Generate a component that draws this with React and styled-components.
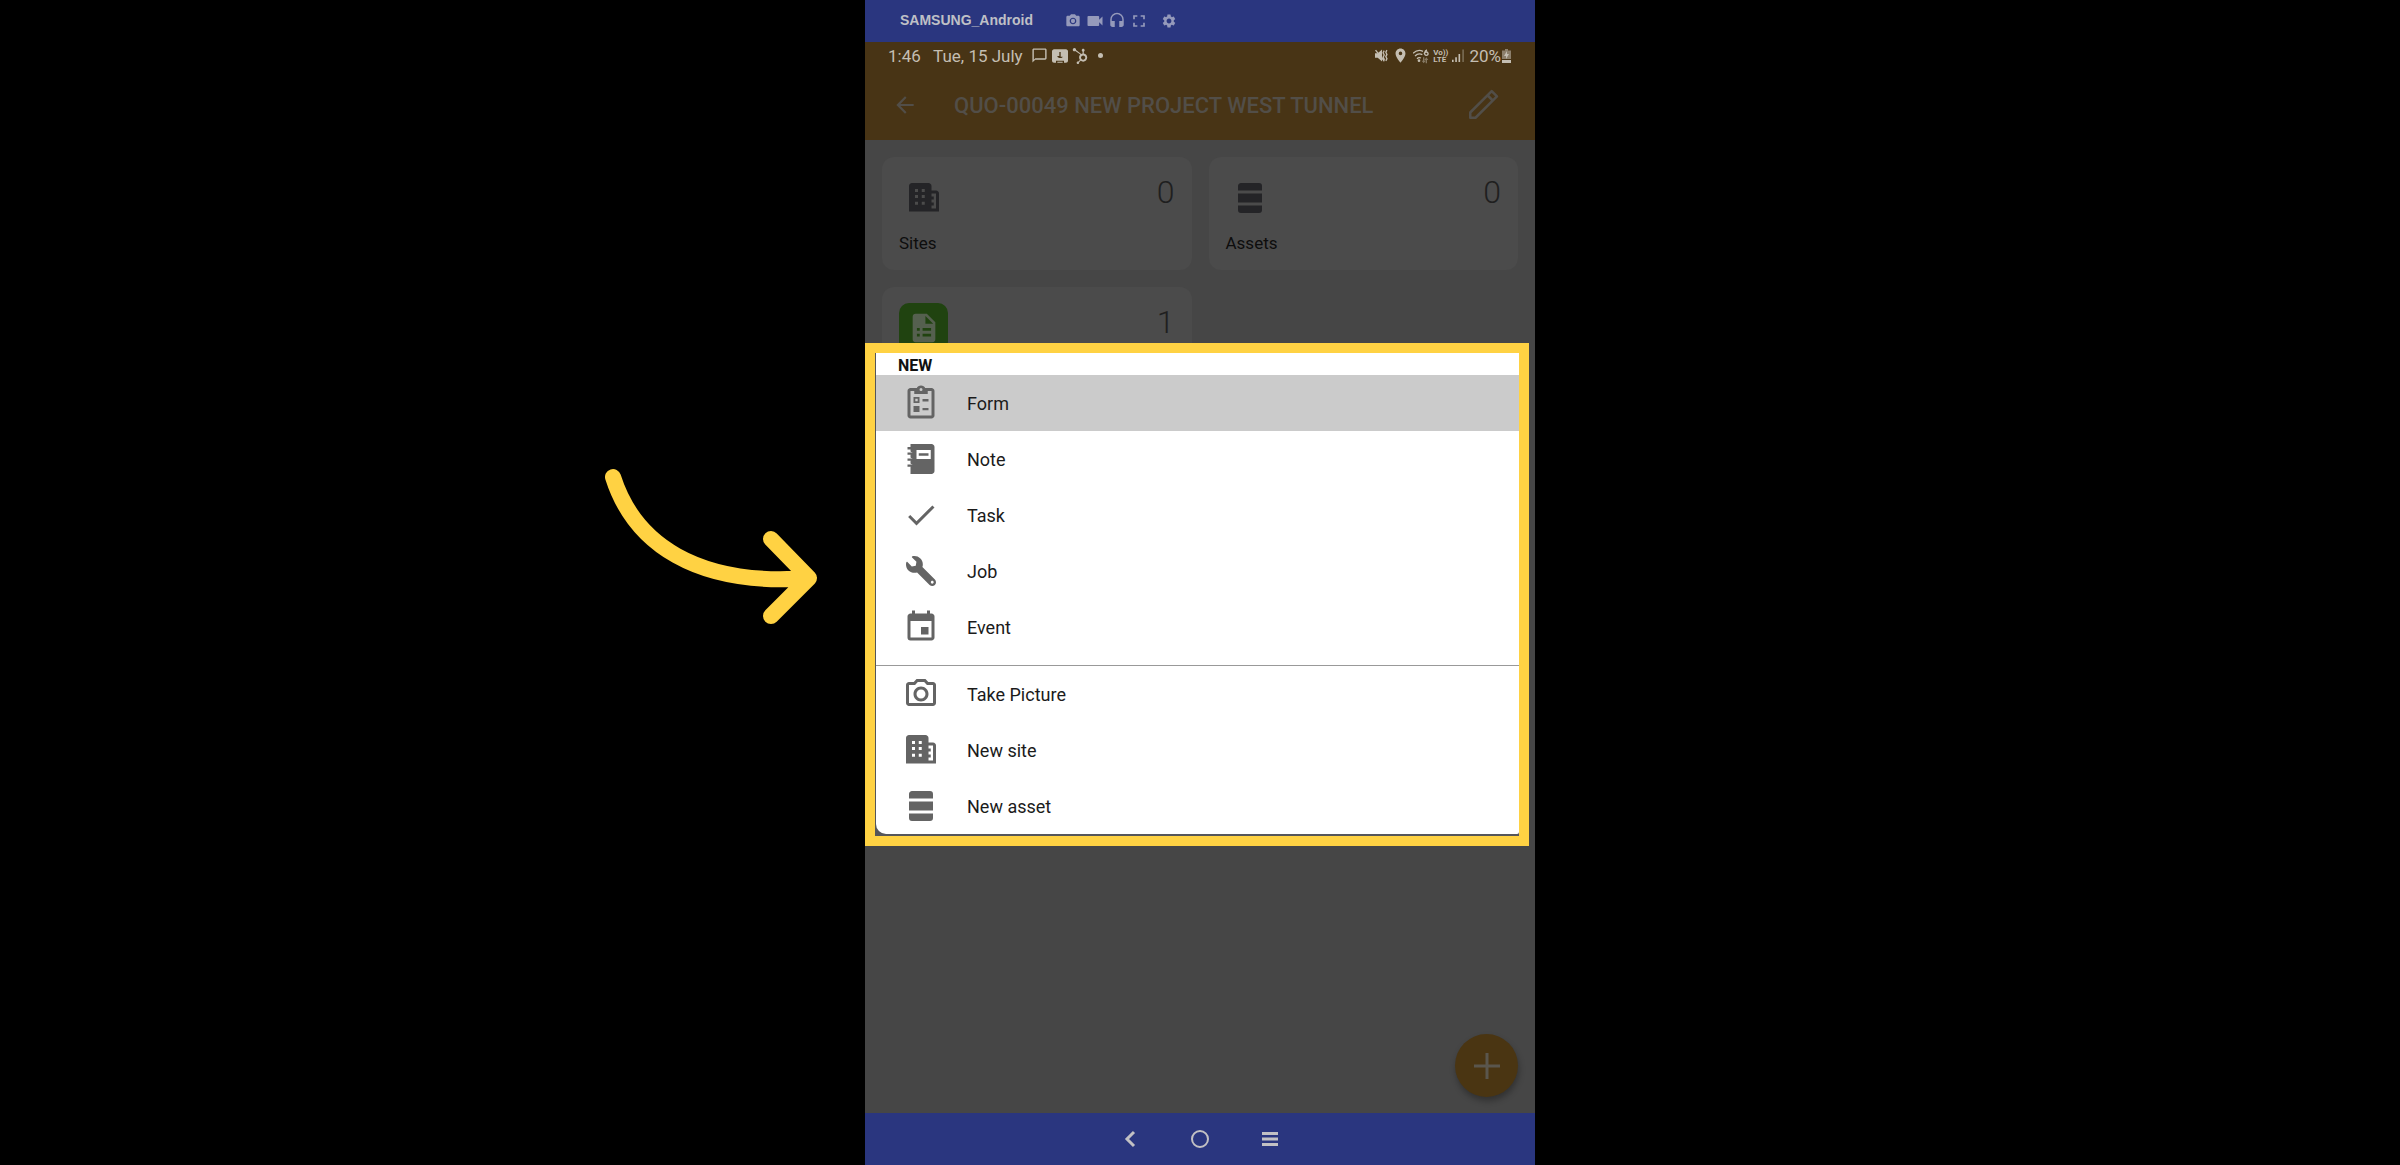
import React from 'react';
import styled, { createGlobalStyle } from 'styled-components';
import {
  MdPhotoCamera,
  MdVideocam,
  MdHeadset,
  MdFullscreen,
  MdSettings,
  MdArrowBack,
  MdCheck,
  MdEvent,
  MdOutlineCameraAlt,
  MdOutlineChatBubbleOutline,
  MdLocationOn,
} from 'react-icons/md';
import { FaHubspot, FaWrench } from 'react-icons/fa';

const GlobalStyle = createGlobalStyle`
  * {
    box-sizing: border-box;
  }

  body {
    margin: 0;
    background: #000;
    font-family: Roboto, "Liberation Sans", sans-serif;
  }

  button {
    padding: 0;
    border: 0;
    background: none;
    color: inherit;
    font: inherit;
    cursor: pointer;
  }

  svg {
    display: block;
    flex-shrink: 0;
  }
`;

const Page = styled.div`
  display: flex;
  justify-content: center;
  min-height: 100vh;
`;

const Phone = styled.main`
  position: relative;
  display: flex;
  flex-direction: column;
  width: 100%;
  max-width: 670px;
  background: #464646;
`;

const TitleBar = styled.div`
  display: flex;
  align-items: center;
  height: 42px;
  padding-left: 35px;
  padding-bottom: 2px;
  background: #2a367f;
  color: #bfc0c6;
  font: bold 14px "Liberation Sans", Arial, sans-serif;
`;

const Tools = styled.div`
  display: flex;
  align-items: center;
  margin-left: 29px;
  padding-top: 2px;
  color: #959abb;

  & button {
    display: flex;
    justify-content: center;
    width: 22px;
  }

  & button:last-child {
    margin-left: 8px;
  }
`;

const StatusBar = styled.div`
  display: flex;
  align-items: center;
  justify-content: space-between;
  height: 28px;
  padding: 0 24px 1px 23px;
  background: #483415;
  color: #c4beb2;
  font-size: 17px;
`;

const StatusGroup = styled.div`
  display: flex;
  align-items: center;
  gap: ${({ gap }) => gap}px;
`;

const Dot = styled.span`
  width: 5px;
  height: 5px;
  margin-left: 6px;
  border-radius: 50%;
  background: currentColor;
`;

const Volte = styled.span`
  font-size: 8px;
  font-weight: 700;
  line-height: 7px;
`;

const AppBar = styled.header`
  display: flex;
  align-items: center;
  height: 70px;
  padding: 0 34px 0 27px;
  background: #483415;
  color: #524e48;
`;

const Title = styled.h1`
  flex: 1;
  margin: 0 0 0 36px;
  font-size: 22px;
  font-weight: 500;
  white-space: nowrap;
`;

const Content = styled.section`
  position: relative;
  flex: 1;
  padding: 17px;
`;

const Cards = styled.div`
  display: grid;
  grid-template-columns: 1fr 1fr;
  gap: 17px;
`;

const Card = styled.article`
  display: flex;
  flex-direction: column;
  justify-content: space-between;
  height: 113px;
  padding: 16px 17px 17px;
  border-radius: 12px;
  background: #4b4b4b;
`;

const CardTop = styled.div`
  display: flex;
  align-items: flex-start;
  justify-content: space-between;
`;

const CardIcon = styled.span`
  display: flex;
  align-items: center;
  justify-content: center;
  width: 49px;
  height: 49px;
  border-radius: 10px;
  background: ${({ color }) => color || 'transparent'};
  color: ${({ color }) => (color ? '#55604f' : '#242427')};
`;

const Count = styled.span`
  color: #1f1f1f;
  font-size: 32px;
  font-weight: 300;
  line-height: 38px;
`;

const CardLabel = styled.span`
  color: #0d0d0d;
  font-size: 17px;
  line-height: 20px;
`;

const Menu = styled.div`
  position: absolute;
  top: 203px;
  left: 0;
  right: 6px;
  border: 10px solid #ffd243;
  background: #55565a;
`;

const Sheet = styled.div`
  margin: 0 0 2px 1px;
  border-radius: 0 0 2px 10px;
  background: #fff;
  overflow: hidden;
`;

const MenuTitle = styled.h2`
  margin: 0;
  padding: 4px 0 0 22px;
  color: #111;
  font-size: 16px;
  font-weight: 700;
  line-height: 18px;
`;

const MenuGroup = styled.div`
  padding-bottom: ${({ divided }) => (divided ? '10px' : '0')};
  border-bottom: ${({ divided }) => (divided ? '1px solid #999' : 'none')};
`;

const MenuItem = styled.button`
  display: flex;
  align-items: center;
  gap: 28px;
  width: 100%;
  height: 56px;
  padding-left: 27px;
  background: ${({ active }) => (active ? '#cbcbcb' : 'transparent')};
  text-align: left;

  & svg {
    color: #646464;
  }

  & span {
    color: #1b1b1b;
    font-size: 18px;
  }
`;

const WrenchIcon = styled(FaWrench)`
  width: 36px;
  height: 30px;
  transform: scaleX(-1);
`;

const AddButton = styled.button`
  position: absolute;
  right: 17px;
  bottom: 16px;
  display: flex;
  align-items: center;
  justify-content: center;
  width: 63px;
  height: 63px;
  border-radius: 50%;
  background: #4a3512;
  color: #5a564d;
  box-shadow: 1px 4px 6px rgba(0, 0, 0, 0.3);
`;

const NavBar = styled.nav`
  display: flex;
  align-items: center;
  justify-content: center;
  gap: 46px;
  height: 52px;
  background: #2a367f;
  color: #c2c1c4;

  & button {
    display: flex;
    justify-content: center;
    width: 24px;
  }
`;

const Pointer = styled.svg`
  position: absolute;
  top: 460px;
  right: 100%;
  margin-right: 44px;
`;

const Icon = ({ size = 36, children }) => (
  <svg width={size} height={size} viewBox="0 0 24 24" fill="currentColor" aria-hidden="true">
    {children}
  </svg>
);

const FormIcon = () => (
  <Icon>
    <path
      fillRule="evenodd"
      d="M19 2h-4.200C14.400 1 13.300.3 12 .3S9.600 1 9.200 2H5c-1.100 0-2 .9-2 2v16.300c0 1.100.9 2 2 2h14c1.100 0 2-.9 2-2V4c0-1.100-.9-2-2-2zM12 2a1 1 0 1 1 0 2 1 1 0 0 1 0-2zM5 4h2.500v2h9V4H19v16.300H5V4z"
    />
    <path fillRule="evenodd" d="M7 8h4v4H7V8zm1.200 1.200v1.600h1.600V9.200H8.200zM7 14h4v4H7v-4zM13 9.400h4V11h-4zM13 15.300h4v1.600h-4z" />
  </Icon>
);

const NoteIcon = () => (
  <Icon>
    <path
      fillRule="evenodd"
      d="M5 2h14c1.100 0 2 .9 2 2v16c0 1.100-.9 2-2 2H5v-5l1.500-1-1.500-1v-2l1.500-1L5 11V9l1.500-1L5 7V2zm4 4v6h9.500V6H9zm1.500 2.200H17v1.600h-6.500V8.200z"
    />
    <path d="M3 15.600h4v1.600H3zM3 11.600h4v1.600H3zM3 7.600h4v1.600H3zM3 4h4v1.600H3z" />
  </Icon>
);

const SiteIcon = () => (
  <Icon>
    <path
      fillRule="evenodd"
      d="M4 2h11c1.100 0 2 .9 2 2v3h3c1.100 0 2 .9 2 2v12H2V4c0-1.100.9-2 2-2zm2 4v2h2V6H6zm4.500 0v2h2V6h-2zM6 10v2h2v-2H6zm4.500 0v2h2v-2h-2zM6 14.500v2h2v-2H6zm4.500 0v2h2v-2h-2zM17 9v2h1.500v2H17v2h1.500v2H17v2h3V9h-3z"
    />
  </Icon>
);

const AssetIcon = () => (
  <Icon>
    <path d="M6 2h12a2 2 0 0 1 2 2v3H4V4c0-1.100.9-2 2-2zM4 9h16v6H4zM4 17h16v3a2 2 0 0 1-2 2H6a2 2 0 0 1-2-2z" />
  </Icon>
);

const DocumentIcon = () => (
  <Icon size={34}>
    <path
      fillRule="evenodd"
      d="M6 2h8l6 6v12a2 2 0 0 1-2 2H6a2 2 0 0 1-2-2V4c0-1.100.9-2 2-2zm7 1.500V9h5.500L13 3.500zM7 12v2h2v-2H7zm4 0v2h6v-2h-6zm-4 4v2h2v-2H7zm4 0v2h6v-2h-6z"
    />
  </Icon>
);

const PencilIcon = () => (
  <Icon>
    <path
      fill="none"
      stroke="currentColor"
      strokeWidth="1.700"
      strokeLinejoin="round"
      d="M3.500 17L17.800 2.700l3.500 3.500L7 20.500H3.500V17zM15 5.500L18.500 9"
    />
  </Icon>
);

const ContactIcon = () => (
  <Icon size={16}>
    <path fillRule="evenodd" d="M3 2h18c1.500 0 3 1.500 3 3v14c0 1.500-1.500 3-3 3h-3v-3H6v3H3c-1.500 0-3-1.500-3-3V5c0-1.500 1.500-3 3-3zm8 4v6H8c0 4 8 4 8 1h-3V6h-2zM8 20.500h8V22H8z" />
  </Icon>
);

const VibrateIcon = () => (
  <Icon size={13}>
    <path d="M0 8h5l8-7v22l-8-7H0z" />
    <path fill="none" stroke="currentColor" strokeWidth="2.500" d="M1 2l15 19M17 3l-2 4 2 4-2 4 2 4-1 4M22 2l-2 4 2 4-2 4 2 4-2 4" />
  </Icon>
);

const WifiIcon = () => (
  <Icon size={16}>
    <path
      fill="none"
      stroke="currentColor"
      strokeWidth="2"
      d="M0 8c5-5 11-5 15-3M3 12c3-3 7-4 11-2M6 16c2-2 4-2 6-1M21 3c-4 1-5 8-1 8 4 0 3-5 0-5-2 0-3 2-3 3"
    />
    <circle cx="9" cy="19" r="2" />
    <path opacity=".5" d="M15 14h2v5h2l-3 4-3-4h2zM21 23h-2v-5h-2l3-4 3 4h-2z" />
  </Icon>
);

const SignalIcon = () => (
  <Icon size={13}>
    <path d="M0 20h3v4H0zM6 15h3v9H6zM12 9h3v15h-3z" />
    <path opacity=".4" d="M19 1h3v23h-3z" />
  </Icon>
);

const BatteryIcon = () => (
  <svg width="9" height="14" viewBox="0 0 9 14" fill="currentColor" aria-hidden="true">
    <path opacity=".55" d="M3 0h3v1.500h3V10H0V1.500h3z" />
    <path d="M0 11h9v3H0zM5 2L2 7h2v3l3-5H5z" />
  </svg>
);

const mainItems = [
  { label: 'Form', icon: <FormIcon />, active: true },
  { label: 'Note', icon: <NoteIcon /> },
  { label: 'Task', icon: <MdCheck size={36} /> },
  { label: 'Job', icon: <WrenchIcon /> },
  { label: 'Event', icon: <MdEvent size={36} /> },
];

const moreItems = [
  { label: 'Take Picture', icon: <MdOutlineCameraAlt size={36} /> },
  { label: 'New site', icon: <SiteIcon /> },
  { label: 'New asset', icon: <AssetIcon /> },
];

const renderItem = ({ label, icon, active }) => (
  <MenuItem key={label} type="button" role="menuitem" active={active ? 1 : undefined}>
    {icon}
    <span>{label}</span>
  </MenuItem>
);

const App = () => {
  return (
    <>
      <GlobalStyle />
      <Page>
        <Phone>
          <TitleBar>
            <span>SAMSUNG_Android</span>
            <Tools>
              <button type="button" aria-label="Screenshot"><MdPhotoCamera size={16} /></button>
              <button type="button" aria-label="Record"><MdVideocam size={20} /></button>
              <button type="button" aria-label="Audio"><MdHeadset size={18} /></button>
              <button type="button" aria-label="Full screen"><MdFullscreen size={20} /></button>
              <button type="button" aria-label="Settings"><MdSettings size={16} /></button>
            </Tools>
          </TitleBar>

          <StatusBar>
            <StatusGroup gap={8}>
              <span>1:46&nbsp;&nbsp; Tue, 15 July</span>
              <StatusGroup gap={4}>
                <MdOutlineChatBubbleOutline size={17} />
                <ContactIcon />
                <FaHubspot size={16} />
                <Dot />
              </StatusGroup>
            </StatusGroup>
            <StatusGroup gap={4}>
              <VibrateIcon />
              <MdLocationOn size={17} />
              <WifiIcon />
              <Volte>Vo))<br />LTE</Volte>
              <SignalIcon />
              <StatusGroup gap={1}>
                <span>20%</span>
                <BatteryIcon />
              </StatusGroup>
            </StatusGroup>
          </StatusBar>

          <AppBar>
            <button type="button" aria-label="Back"><MdArrowBack size={26} /></button>
            <Title>QUO-00049 NEW PROJECT WEST TUNNEL</Title>
            <button type="button" aria-label="Edit"><PencilIcon /></button>
          </AppBar>

          <Content>
            <Cards>
              <Card>
                <CardTop>
                  <CardIcon><SiteIcon /></CardIcon>
                  <Count>0</Count>
                </CardTop>
                <CardLabel>Sites</CardLabel>
              </Card>
              <Card>
                <CardTop>
                  <CardIcon><AssetIcon /></CardIcon>
                  <Count>0</Count>
                </CardTop>
                <CardLabel>Assets</CardLabel>
              </Card>
              <Card>
                <CardTop>
                  <CardIcon color="#204310"><DocumentIcon /></CardIcon>
                  <Count>1</Count>
                </CardTop>
              </Card>
            </Cards>

            <Menu role="menu">
              <Sheet>
                <MenuTitle>NEW</MenuTitle>
                <MenuGroup divided={1}>{mainItems.map(renderItem)}</MenuGroup>
                <MenuGroup>{moreItems.map(renderItem)}</MenuGroup>
              </Sheet>
            </Menu>

            <AddButton type="button" aria-label="Add">
              <svg width="28" height="28" viewBox="0 0 28 28" stroke="currentColor" strokeWidth="3">
                <path d="M14 1v26M1 14h26" />
              </svg>
            </AddButton>
          </Content>

          <NavBar>
            <button type="button" aria-label="Back">
              <svg width="12" height="18" viewBox="0 0 12 18" fill="none" stroke="currentColor" strokeWidth="3">
                <path d="M10 2L3 9l7 7" />
              </svg>
            </button>
            <button type="button" aria-label="Home">
              <svg width="18" height="18" viewBox="0 0 18 18" fill="none" stroke="currentColor" strokeWidth="2">
                <circle cx="9" cy="9" r="8" />
              </svg>
            </button>
            <button type="button" aria-label="Recent apps">
              <svg width="16" height="14" viewBox="0 0 16 14" fill="currentColor">
                <path d="M0 0h16v3H0zM0 5.500h16v3H0zM0 11h16v3H0z" />
              </svg>
            </button>
          </NavBar>

          <Pointer
            width="220"
            height="170"
            viewBox="0 0 220 170"
            fill="none"
            stroke="#ffd243"
            strokeWidth="16"
            strokeLinecap="round"
            strokeLinejoin="round"
          >
            <path d="M12 17C33 83 95 127 208 118M170 79l38 39-38 38" />
          </Pointer>
        </Phone>
      </Page>
    </>
  );
};

export default App;
